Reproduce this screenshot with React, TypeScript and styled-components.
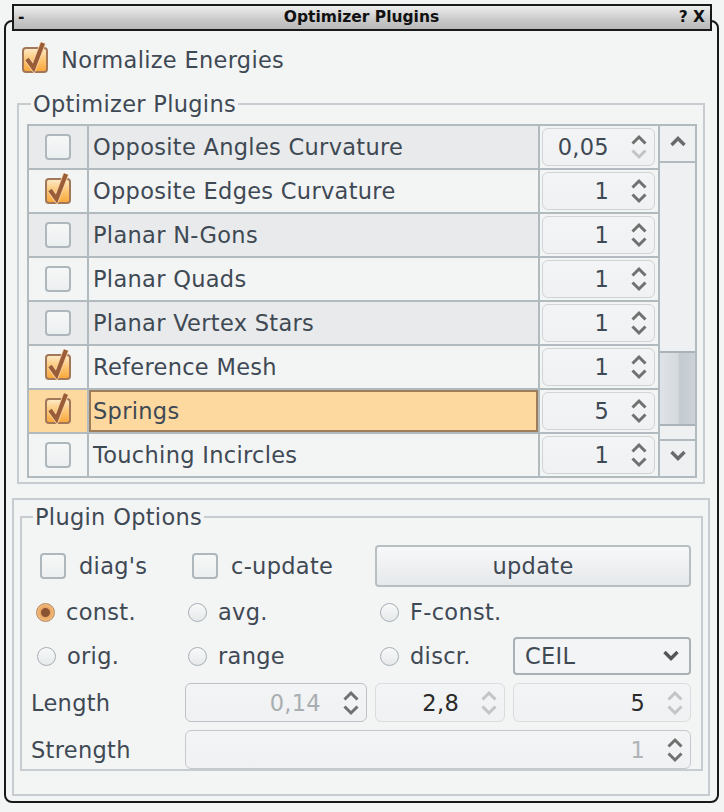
import React from "react";
import styled, { createGlobalStyle } from "styled-components";

const FONT = `"DejaVu Sans", "Liberation Sans", sans-serif`;
const TEXT = "#3f4954";
const LINE = "#b1babf";
const GROUP = "#c6ccd0";

const GlobalStyle = createGlobalStyle`
  html, body { margin: 0; padding: 0; background: #f3f4f4; }
  body { font-family: ${FONT}; }
  * { box-sizing: border-box; }
`;

const Page = styled.div`
  width: 724px;
  height: 812px;
  padding: 20px 5px 0 4px;
  background: #f3f4f4;
  font-family: ${FONT};
  color: ${TEXT};
  letter-spacing: 0.3px;
`;

const Frame = styled.div`
  height: 783px;
  border: 2px solid #181818;
  border-radius: 8px;
  display: flex;
  flex-direction: column;
  background: #f3f4f4;
`;

const TitleBar = styled.div`
  margin: -18px 5px 0 6px;
  height: 27px;
  flex: none;
  border: 2px solid #1a1a1a;
  background: linear-gradient(#eeeeee, #c9c9c9 60%, #b9b9b9);
  display: grid;
  grid-template-columns: 1fr auto 1fr;
  align-items: center;
  padding: 0 5px 0 4px;
  font: bold 15.5px/23px ${FONT};
  letter-spacing: 0;
  color: #111;
`;

const TitleSide = styled.span<{ $right?: boolean }>`
  justify-self: ${(p) => (p.$right ? "end" : "start")};
`;

const Body = styled.div`
  flex: 1;
  display: flex;
  flex-direction: column;
`;

const NormalizeRow = styled.label`
  display: flex;
  align-items: center;
  gap: 13px;
  height: 30px;
  margin: 14px 0 0 16px;
  font-size: 22.5px;
`;

const Group = styled.fieldset<{ $m: string; $p: string }>`
  margin: ${(p) => p.$m};
  padding: ${(p) => p.$p};
  border: 2px solid ${GROUP};
  min-width: 0;
`;

const Legend = styled.legend<{ $ml: number }>`
  margin-left: ${(p) => p.$ml}px;
  padding: 0 2px;
  font-size: 22.5px;
  line-height: 26px;
  color: ${TEXT};
`;

const Table = styled.div`
  display: flex;
  gap: 2px;
  border: 2px solid ${LINE};
  background: ${LINE};
  height: 354px;
`;

const Rows = styled.div`
  display: flex;
  flex-direction: column;
  gap: 2px;
`;

const Row = styled.div`
  display: grid;
  grid-template-columns: 58px 449px 118px;
  column-gap: 2px;
  height: 42px;
`;

const CheckCell = styled.div<{ $bg: string }>`
  background: ${(p) => p.$bg};
  display: flex;
  align-items: center;
  justify-content: center;
`;

const NameCell = styled.div<{ $bg: string; $selected?: boolean }>`
  background: ${(p) => p.$bg};
  display: flex;
  align-items: center;
  padding-left: 4px;
  font-size: 22.5px;
  color: ${TEXT};
  box-shadow: ${(p) => (p.$selected ? "inset 0 0 0 2px #9e7d5a" : "none")};
`;

const ValueCell = styled.div`
  background: #f3f4f4;
  padding: 2px 3px 2px 2px;
  display: flex;
`;

const Scrollbar = styled.div`
  width: 35px;
  display: flex;
  flex-direction: column;
  background: #eef0f1;
`;

const ScrollButton = styled.div<{ $top?: boolean }>`
  height: 37px;
  flex: none;
  display: flex;
  align-items: center;
  justify-content: center;
  padding-bottom: 6px;
  ${(p) => (p.$top ? `border-bottom: 2px solid ${LINE};` : `border-top: 2px solid ${LINE};`)}
`;

const Track = styled.div`
  flex: 1;
  display: flex;
  flex-direction: column;
`;

const Thumb = styled.div`
  margin-top: 188px;
  height: 75px;
  border-top: 2px solid #aab3b9;
  border-bottom: 2px solid #aab3b9;
  background: linear-gradient(90deg, #dfe3e7 0%, #d5dadf 50%, #c3cad0 56%, #ccd2d7 100%);
`;

/* ---------- controls ---------- */

const Box = styled.span<{ $checked?: boolean }>`
  position: relative;
  flex: none;
  width: 26px;
  height: 26px;
  border-radius: 4px;
  border: 2px solid ${(p) => (p.$checked ? "#a2775a" : "#aeb7bc")};
  background: ${(p) =>
    p.$checked
      ? "linear-gradient(#fde9c4 0%, #fcc978 45%, #f9a83c 100%)"
      : "linear-gradient(#f6f7f7, #eceff0)"};
`;

const Tick = styled.svg`
  position: absolute;
  left: -2px;
  top: -2px;
  overflow: visible;
`;

const CheckBox: React.FC<{ checked?: boolean }> = ({ checked }) => (
  <Box $checked={checked}>
    {checked && (
      <Tick width="26" height="26" viewBox="0 0 26 26">
        <path d="M5 12 L11.5 21 L21 -4" fill="none" stroke="#f7d3a8" strokeWidth="6" strokeLinejoin="miter" />
        <path d="M5 12 L11.5 21 L21 -4" fill="none" stroke="#9a5d38" strokeWidth="4.2" strokeLinejoin="miter" />
      </Tick>
    )}
  </Box>
);

const RadioDot = styled.span<{ $on?: boolean }>`
  flex: none;
  width: 19px;
  height: 19px;
  border-radius: 50%;
  border: 1.6px solid ${(p) => (p.$on ? "#b5865c" : "#a6afb4")};
  background: ${(p) =>
    p.$on
      ? "radial-gradient(circle, #8a5432 0 4px, #e9a460 5px, #fbd7a3 100%)"
      : "linear-gradient(#f8f9f9, #e6e9eb)"};
`;

const OptItem = styled.label<{ $pl: number; $gap: number }>`
  display: flex;
  align-items: center;
  gap: ${(p) => p.$gap}px;
  padding-left: ${(p) => p.$pl}px;
  font-size: 22.5px;
  color: ${TEXT};
  white-space: nowrap;
`;

const SpinBox = styled.div<{ $border: string; $col?: string }>`
  flex: 1;
  display: flex;
  align-items: center;
  justify-content: flex-end;
  border: 1.5px solid ${(p) => p.$border};
  border-radius: 6px;
  background: linear-gradient(#f3f4f5, #eff1f2);
  ${(p) => (p.$col ? `grid-column: ${p.$col};` : "")}
`;

const SpinValue = styled.span<{ $color: string }>`
  font-size: 22.5px;
  color: ${(p) => p.$color};
  margin-right: 20px;
`;

const Arrows = styled.svg`
  flex: none;
  margin-right: 5px;
`;

type SpinProps = {
  value: string;
  color?: string;
  up?: string;
  down?: string;
  border?: string;
  col?: string;
};

const DARK_ARROW = "#707070";
const LIGHT_ARROW = "#c2c4c5";

const Spinner: React.FC<SpinProps> = ({
  value,
  color = TEXT,
  up = DARK_ARROW,
  down = DARK_ARROW,
  border = "#cfd4d7",
  col,
}) => (
  <SpinBox $border={border} $col={col}>
    <SpinValue $color={color}>{value}</SpinValue>
    <Arrows width="20" height="30" viewBox="0 0 20 30">
      <path d="M3.5 11.5 L10 5 L16.5 11.5" fill="none" stroke={up} strokeWidth="3" />
      <path d="M3.5 18.5 L10 25 L16.5 18.5" fill="none" stroke={down} strokeWidth="3" />
    </Arrows>
  </SpinBox>
);

const OptionsPanel = styled.div`
  flex: 1;
  margin: 14px 7px 5px 6px;
  border: 2px solid ${GROUP};
  display: flex;
  flex-direction: column;
`;

const OptionsGrid = styled.div`
  display: grid;
  grid-template-columns: 146px 182px 130px 178px;
  grid-template-rows: 42px 34px 38px 39px 39px;
  column-gap: 8px;
  row-gap: 8px;
`;

const UpdateButton = styled.button`
  grid-column: 3 / 5;
  border: 2px solid #b7bfc3;
  border-radius: 4px;
  background: linear-gradient(#f7f8f9 0%, #eef0f2 50%, #e6e9eb 100%);
  font: 22.5px ${FONT};
  letter-spacing: 0.3px;
  color: ${TEXT};
  padding: 0;
`;

const Combo = styled.div`
  display: flex;
  align-items: center;
  justify-content: space-between;
  padding: 0 9px 0 10px;
  border: 2px solid #a8b1b6;
  border-radius: 4px;
  background: #f3f4f5;
  font-size: 22.5px;
  color: ${TEXT};
`;

const FieldLabel = styled.span`
  display: flex;
  align-items: center;
  font-size: 22.5px;
  color: ${TEXT};
`;

const Chevron: React.FC<{ up?: boolean; color?: string }> = ({ up, color = "#666" }) => (
  <svg width="18" height="12" viewBox="0 0 18 12">
    <path
      d={up ? "M2.5 10 L9 3.5 L15.5 10" : "M2.5 2 L9 8.5 L15.5 2"}
      fill="none"
      stroke={color}
      strokeWidth="3.4"
    />
  </svg>
);

const plugins = [
  { name: "Opposite Angles Curvature", checked: false, value: "0,05", downOff: true },
  { name: "Opposite Edges Curvature", checked: true, value: "1" },
  { name: "Planar N-Gons", checked: false, value: "1" },
  { name: "Planar Quads", checked: false, value: "1" },
  { name: "Planar Vertex Stars", checked: false, value: "1" },
  { name: "Reference Mesh", checked: true, value: "1" },
  { name: "Springs", checked: true, value: "5", selected: true },
  { name: "Touching Incircles", checked: false, value: "1" },
];

const Radio: React.FC<{ on?: boolean; pl: number; label: string }> = ({ on, pl, label }) => (
  <OptItem $pl={pl} $gap={11}>
    <RadioDot $on={on} />
    {label}
  </OptItem>
);

export default function App() {
  return (
    <Page>
      <GlobalStyle />
      <Frame>
        <TitleBar>
          <TitleSide>-</TitleSide>
          <span>Optimizer Plugins</span>
          <TitleSide $right>? X</TitleSide>
        </TitleBar>
        <Body>
          <NormalizeRow>
            <CheckBox checked />
            Normalize Energies
          </NormalizeRow>

          <Group $m="16px 12px 0 11px" $p="7px 6px 4px 8px">
            <Legend $ml={4}>Optimizer Plugins</Legend>
            <Table>
              <Rows>
                {plugins.map((p, i) => {
                  const base = i % 2 === 0 ? "#e8eaeb" : "#f3f4f4";
                  const bg = p.selected ? "#fdd89f" : base;
                  return (
                    <Row key={p.name}>
                      <CheckCell $bg={bg}>
                        <CheckBox checked={p.checked} />
                      </CheckCell>
                      <NameCell $bg={bg} $selected={p.selected}>
                        {p.name}
                      </NameCell>
                      <ValueCell>
                        <Spinner value={p.value} down={p.downOff ? LIGHT_ARROW : DARK_ARROW} />
                      </ValueCell>
                    </Row>
                  );
                })}
              </Rows>
              <Scrollbar>
                <ScrollButton $top>
                  <Chevron up color="#6a6a6a" />
                </ScrollButton>
                <Track>
                  <Thumb />
                </Track>
                <ScrollButton>
                  <Chevron color="#6a6a6a" />
                </ScrollButton>
              </Scrollbar>
            </Table>
          </Group>

          <OptionsPanel>
            <Group $m="4px 5px 6px 6px" $p="15px 10px 0 9px">
              <Legend $ml={2}>Plugin Options</Legend>
              <OptionsGrid>
                <OptItem $pl={9} $gap={13}>
                  <CheckBox />
                  diag's
                </OptItem>
                <OptItem $pl={7} $gap={13}>
                  <CheckBox />
                  c-update
                </OptItem>
                <UpdateButton>update</UpdateButton>

                <Radio on pl={5} label="const." />
                <Radio pl={3} label="avg." />
                <Radio pl={5} label="F-const." />
                <span />

                <Radio pl={6} label="orig." />
                <Radio pl={3} label="range" />
                <Radio pl={5} label="discr." />
                <Combo>
                  CEIL
                  <Chevron color="#555" />
                </Combo>

                <FieldLabel>Length</FieldLabel>
                <Spinner value="0,14" color="#a9aeb1" border="#bcc3c7" />
                <Spinner value="2,8" color="#2b2b2b" up={LIGHT_ARROW} down={LIGHT_ARROW} border="#d9dddf" />
                <Spinner value="5" color="#2b2b2b" up={LIGHT_ARROW} down={LIGHT_ARROW} border="#d9dddf" />

                <FieldLabel>Strength</FieldLabel>
                <Spinner value="1" color="#b0b4b7" border="#c3c9cc" col="2 / 5" />
              </OptionsGrid>
            </Group>
          </OptionsPanel>
        </Body>
      </Frame>
    </Page>
  );
}
